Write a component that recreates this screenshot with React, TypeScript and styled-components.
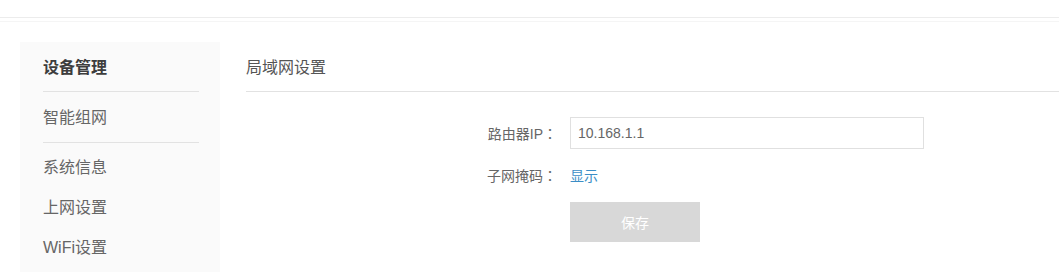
import React from "react";
import styled, { createGlobalStyle } from "styled-components";

const GlobalStyle = createGlobalStyle`
  html, body {
    margin: 0;
    padding: 0;
    background: #fff;
    font-family: "Liberation Sans", "Noto Sans CJK SC", sans-serif;
    color: #555;
    overflow: hidden;
  }
`;

const TopBar = styled.div`
  height: 17px;
  border-bottom: 1px solid #ececec;
  box-shadow: 0 3px 0 #fff, 0 4px 0 #f5f5f5;
`;

const Layout = styled.div`
  display: flex;
  gap: 26px;
  padding: 24px 0 0 20px;
`;

const Sidebar = styled.nav`
  width: 200px;
  min-height: 240px;
  box-sizing: border-box;
  background: #fafafa;
  padding: 6px 21px 0 23px;
  display: flex;
  flex-direction: column;
`;

const NavItem = styled.div<{ $divided?: boolean; $title?: boolean }>`
  font-size: 16px;
  line-height: 40px;
  color: ${(p) => (p.$title ? "#3d3d3d" : "#666")};
  font-weight: ${(p) => (p.$title ? 700 : 400)};
  ${(p) =>
    p.$divided &&
    `
    padding-bottom: ${p.$title ? 3 : 4}px;
    margin-bottom: ${p.$title ? 6 : 5}px;
    border-bottom: 1px solid #e2e2e2;
  `}
`;

const Main = styled.main`
  flex: 1;
  display: flex;
  flex-direction: column;
`;

const Title = styled.h2`
  margin: 6px 0 0;
  font-size: 16px;
  font-weight: 400;
  line-height: 40px;
  color: #555;
  padding-bottom: 3px;
  border-bottom: 1px solid #e2e2e2;
`;

const Form = styled.div`
  display: grid;
  grid-template-columns: 311px 354px;
  column-gap: 13px;
  row-gap: 14px;
  align-items: center;
  margin-top: 25px;
`;

const Label = styled.div`
  text-align: right;
  font-size: 14px;
  line-height: 24px;
  color: #666;
`;

const Colon = styled.span`
  font-family: "Noto Sans CJK TC", sans-serif;
`;

const Input = styled.input`
  box-sizing: border-box;
  width: 354px;
  height: 32px;
  border: 1px solid #e0e0e0;
  padding: 0 7px;
  font-family: inherit;
  font-size: 14px;
  color: #666;
  outline: none;
`;

const Link = styled.a`
  font-size: 14px;
  line-height: 24px;
  color: #3b8ec6;
  text-decoration: none;
  cursor: pointer;
`;

const SaveButton = styled.button`
  grid-column: 2;
  width: 130px;
  height: 40px;
  border: none;
  background: #d8d8d8;
  color: #fff;
  font-family: inherit;
  font-size: 14px;
`;

export default function App() {
  return (
    <>
      <GlobalStyle />
      <TopBar />
      <Layout>
        <Sidebar>
          <NavItem $title $divided>设备管理</NavItem>
          <NavItem $divided>智能组网</NavItem>
          <NavItem>系统信息</NavItem>
          <NavItem>上网设置</NavItem>
          <NavItem>WiFi设置</NavItem>
        </Sidebar>
        <Main>
          <Title>局域网设置</Title>
          <Form>
            <Label>
              路由器IP<Colon>：</Colon>
            </Label>
            <Input defaultValue="10.168.1.1" />
            <Label>
              子网掩码<Colon>：</Colon>
            </Label>
            <div>
              <Link>显示</Link>
            </div>
            <SaveButton>保存</SaveButton>
          </Form>
        </Main>
      </Layout>
    </>
  );
}
